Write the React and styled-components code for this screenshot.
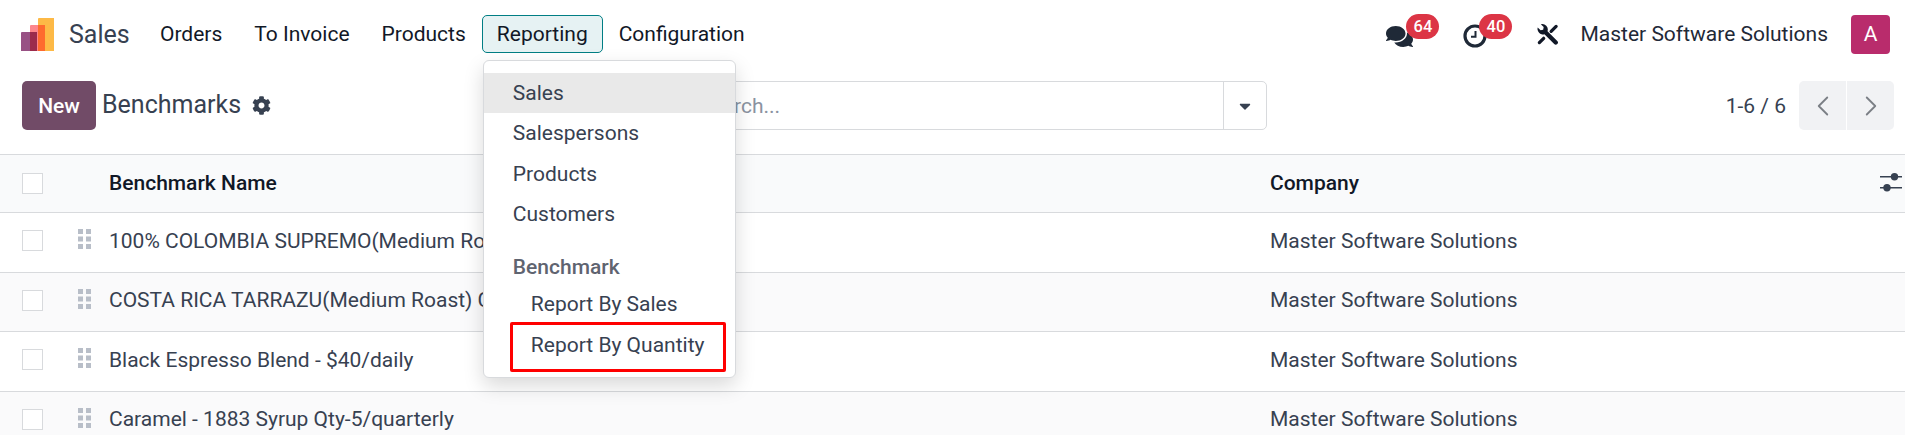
import styled, { createGlobalStyle } from "styled-components";
import { FaComments, FaCog, FaCaretDown } from "react-icons/fa";
import { FiChevronLeft, FiChevronRight } from "react-icons/fi";

const rows = [
  "100% COLOMBIA SUPREMO(Medium Roast)",
  "COSTA RICA TARRAZU(Medium Roast) Coffee",
  "Black Espresso Blend - $40/daily",
  "Caramel - 1883 Syrup Qty-5/quarterly",
];

export default function App() {
  return (
    <Page>
      <GlobalStyle />
      <Navbar>
        <Logo />
        <Brand>Sales</Brand>
        <NavItem>Orders</NavItem>
        <NavItem>To Invoice</NavItem>
        <NavItem>Products</NavItem>
        <NavDropdown>
          <NavItem $active>Reporting</NavItem>
          <Menu>
            <MenuItem $hover>Sales</MenuItem>
            <MenuItem>Salespersons</MenuItem>
            <MenuItem>Products</MenuItem>
            <MenuItem>Customers</MenuItem>
            <MenuHeader>Benchmark</MenuHeader>
            <MenuItem $sub>Report By Sales</MenuItem>
            <MenuItem $sub>
              Report By Quantity
              <Highlight />
            </MenuItem>
          </Menu>
        </NavDropdown>
        <NavItem>Configuration</NavItem>
        <Systray>
          <TrayIcon $width="77px">
            <FaComments size={27} />
            <Badge $left="20px">64</Badge>
          </TrayIcon>
          <TrayIcon $width="73px">
            <ClockIcon />
            <Badge $left="16px">40</Badge>
          </TrayIcon>
          <ToolsWrap>
            <ToolsIcon />
          </ToolsWrap>
          <Company>Master Software Solutions</Company>
          <Avatar>A</Avatar>
        </Systray>
      </Navbar>

      <ControlPanel>
        <TitleGroup>
          <NewButton>New</NewButton>
          <Title>Benchmarks</Title>
          <FaCog size={19} color="#374151" />
        </TitleGroup>
        <SearchBox>
          <SearchText>Search...</SearchText>
          <SearchToggle>
            <FaCaretDown size={18} color="#374151" />
          </SearchToggle>
        </SearchBox>
        <PagerGroup>
          <PagerText>1-6 / 6</PagerText>
          <PagerButton $left>
            <FiChevronLeft size={34} strokeWidth={1.3} />
          </PagerButton>
          <PagerButton>
            <FiChevronRight size={34} strokeWidth={1.3} />
          </PagerButton>
        </PagerGroup>
      </ControlPanel>

      <HeaderRow>
        <CheckCell>
          <Checkbox />
        </CheckCell>
        <span />
        <HeadText>Benchmark Name</HeadText>
        <HeadText>Company</HeadText>
        <SlidersIcon />
      </HeaderRow>
      {rows.map((name, i) => (
        <Row key={name} $even={i % 2 === 1}>
          <CheckCell>
            <Checkbox />
          </CheckCell>
          <GripIcon />
          <span>{name}</span>
          <span>Master Software Solutions</span>
        </Row>
      ))}
    </Page>
  );
}

function Logo() {
  return (
    <LogoSvg viewBox="0 0 33 33" width="33" height="33">
      <path d="M17 1a1 1 0 0 1 1-1h15v33H17z" fill="#fdb946" />
      <path d="M9 8a1 1 0 0 1 1-1h14v26H9z" fill="#fc868d" />
      <path d="M17 7h7v26h-7z" fill="#fe6a2e" />
      <path d="M0 15a1 1 0 0 1 1-1h15v19H0z" fill="#985184" />
      <path d="M9 14h7v19H9z" fill="#9b2b4c" />
    </LogoSvg>
  );
}

function ClockIcon() {
  return (
    <svg width="24" height="24" viewBox="0 0 24 24">
      <circle cx="12" cy="12" r="10" fill="none" stroke="#1f2937" strokeWidth="3.2" />
      <path d="M12.5 7v5.8H8" fill="none" stroke="#1f2937" strokeWidth="2" />
    </svg>
  );
}

function ToolsIcon() {
  return (
    <svg width="23" height="23" viewBox="0 0 24 24">
      <path
        d="M5 1.2 8 4.2 7.5 7 4.8 7.6 1.8 4.6A5.8 5.8 0 0 0 8.8 11.8L19 22A2.2 2.2 0 0 0 22.2 18.8L12 8.6A5.8 5.8 0 0 0 5 1.2Z"
        fill="#111827"
      />
      <path
        d="M21 3.5 15.8 8.7M3.5 20.5 8 16"
        stroke="#111827"
        strokeWidth="3.4"
        strokeLinecap="round"
      />
    </svg>
  );
}

function SlidersIcon() {
  return (
    <SlidersSvg viewBox="0 0 22 20" width="22" height="20">
      <path d="M0 4.7h22M0 15.7h22" stroke="#374151" strokeWidth="1.4" />
      <circle cx="14.5" cy="4.7" r="3.7" fill="#374151" />
      <circle cx="7" cy="15.7" r="3.7" fill="#374151" />
    </SlidersSvg>
  );
}

function GripIcon() {
  return (
    <GripSvg viewBox="0 0 13 20" width="13" height="20">
      {[0, 7.5, 15].map((y) => (
        <g key={y} fill="#b8bec8">
          <rect x="0" y={y} width="5" height="5" />
          <rect x="8" y={y} width="5" height="5" />
        </g>
      ))}
    </GripSvg>
  );
}

const GlobalStyle = createGlobalStyle`
  html, body {
    margin: 0;
    background: #fff;
  }
  * {
    box-sizing: border-box;
  }
`;

const Page = styled.div`
  width: 1905px;
  height: 435px;
  overflow: hidden;
  font-family: "Roboto", sans-serif;
  font-size: 21px;
  color: #374151;
  background: #fff;
`;

const Navbar = styled.header`
  height: 68px;
  display: flex;
  align-items: center;
  padding-left: 21px;
  padding-right: 15px;
  color: #111827;
`;

const LogoSvg = styled.svg`
  flex: none;
`;

const Brand = styled.div`
  width: 75px;
  margin-left: 15px;
  font-size: 25px;
  color: #374151;
`;

const NavItem = styled.div`
  height: 38px;
  display: flex;
  align-items: center;
  padding: 0 ${(p) => (p.$active ? "14px" : "15px")};
  border-radius: 5px;
  border: 1px solid ${(p) => (p.$active ? "#017e84" : "transparent")};
  background: ${(p) => (p.$active ? "#e6f2f3" : "transparent")};
`;

const NavDropdown = styled.div`
  position: relative;
`;

const Menu = styled.div`
  position: absolute;
  top: 45px;
  left: 1px;
  z-index: 10;
  width: 253px;
  padding: 12px 0;
  background: #fff;
  border: 1px solid #d8dadd;
  border-radius: 6px;
  box-shadow: 0 8px 20px rgba(0, 0, 0, 0.15);
  color: #374151;
`;

const MenuItem = styled.div`
  position: relative;
  height: 40.3px;
  display: flex;
  align-items: center;
  padding-left: ${(p) => (p.$sub ? "47px" : "29px")};
  background: ${(p) => (p.$hover ? "#e9e9e9" : "transparent")};
`;

const MenuHeader = styled.div`
  height: 50px;
  padding: 16px 0 0 29px;
  line-height: 34px;
  font-weight: 500;
  color: #5f6470;
`;

const Highlight = styled.div`
  position: absolute;
  top: -2px;
  bottom: -7px;
  left: 26px;
  width: 216px;
  border: 3px solid #ff0000;
  border-radius: 2px;
`;

const Systray = styled.div`
  margin-left: auto;
  display: flex;
  align-items: center;
  color: #1f2937;
`;

const TrayIcon = styled.div`
  position: relative;
  width: ${(p) => p.$width};
  height: 38px;
  display: flex;
  align-items: center;
  padding-top: 4px;
`;

const Badge = styled.span`
  position: absolute;
  top: -1px;
  left: ${(p) => p.$left};
  height: 25px;
  min-width: 33px;
  padding: 0 6px;
  display: flex;
  align-items: center;
  justify-content: center;
  border-radius: 13px;
  background: #dc3545;
  color: #fff;
  font-size: 16.5px;
  font-weight: 500;
`;

const ToolsWrap = styled.div`
  width: 44px;
  display: flex;
  align-items: center;
`;

const Company = styled.div`
  margin-right: 23px;
  color: #1f2937;
`;

const Avatar = styled.div`
  width: 39px;
  height: 39px;
  display: flex;
  align-items: center;
  justify-content: center;
  border-radius: 4px;
  background: #b92c6c;
  color: #fff;
  font-size: 21px;
`;

const ControlPanel = styled.section`
  display: grid;
  grid-template-columns: 618px 627px 1fr;
  align-items: center;
  padding: 13px 11px 24px 22px;
`;

const TitleGroup = styled.div`
  display: flex;
  align-items: center;
`;

const NewButton = styled.button`
  width: 74px;
  height: 49px;
  padding: 0;
  border: 0;
  border-radius: 5px;
  background: #714b67;
  color: #fff;
  font-family: inherit;
  font-size: 21px;
  font-weight: 500;
`;

const Title = styled.div`
  margin-left: 6px;
  margin-right: 11px;
  margin-top: -2px;
  font-size: 25px;
  color: #374151;
`;

const SearchBox = styled.div`
  height: 49px;
  display: flex;
  align-items: center;
  justify-content: space-between;
  padding-left: 58px;
  border: 1px solid #d8dadd;
  border-radius: 5px;
`;

const SearchText = styled.span`
  color: #8b93a1;
`;

const SearchToggle = styled.div`
  width: 43px;
  height: 100%;
  display: flex;
  align-items: center;
  justify-content: center;
  border-left: 1px solid #d8dadd;
`;

const PagerGroup = styled.div`
  display: flex;
  align-items: center;
  justify-content: flex-end;
`;

const PagerText = styled.span`
  margin-right: 13px;
  color: #374151;
`;

const PagerButton = styled.div`
  width: 47px;
  height: 49px;
  display: flex;
  align-items: center;
  justify-content: center;
  background: #f1f2f4;
  color: #7b7f85;
  border-radius: ${(p) => (p.$left ? "5px 0 0 5px" : "0 5px 5px 0")};
  margin-left: ${(p) => (p.$left ? "0" : "1px")};
`;

const HeaderRow = styled.div`
  position: relative;
  display: grid;
  grid-template-columns: 78px 31px 1161px 1fr;
  align-items: center;
  height: 59px;
  background: #f9fafb;
  border-top: 1px solid #d8dadd;
  border-bottom: 1px solid #d8dadd;
`;

const HeadText = styled.span`
  margin-top: -2px;
  font-weight: 500;
  color: #111827;
`;

const SlidersSvg = styled.svg`
  position: absolute;
  right: 3px;
  top: 17px;
`;

const Row = styled.div`
  display: grid;
  grid-template-columns: 78px 31px 1161px 1fr;
  align-items: center;
  height: 59.5px;
  padding-bottom: 3px;
  background: ${(p) => (p.$even ? "#fafafb" : "#fff")};
  border-bottom: 1px solid #d8dadd;
`;

const CheckCell = styled.div`
  padding-left: 22px;
  display: flex;
`;

const Checkbox = styled.div`
  width: 21px;
  height: 21px;
  background: #fff;
  border: 1px solid #d8dadd;
`;

const GripSvg = styled.svg`
  margin-top: -3px;
`;
